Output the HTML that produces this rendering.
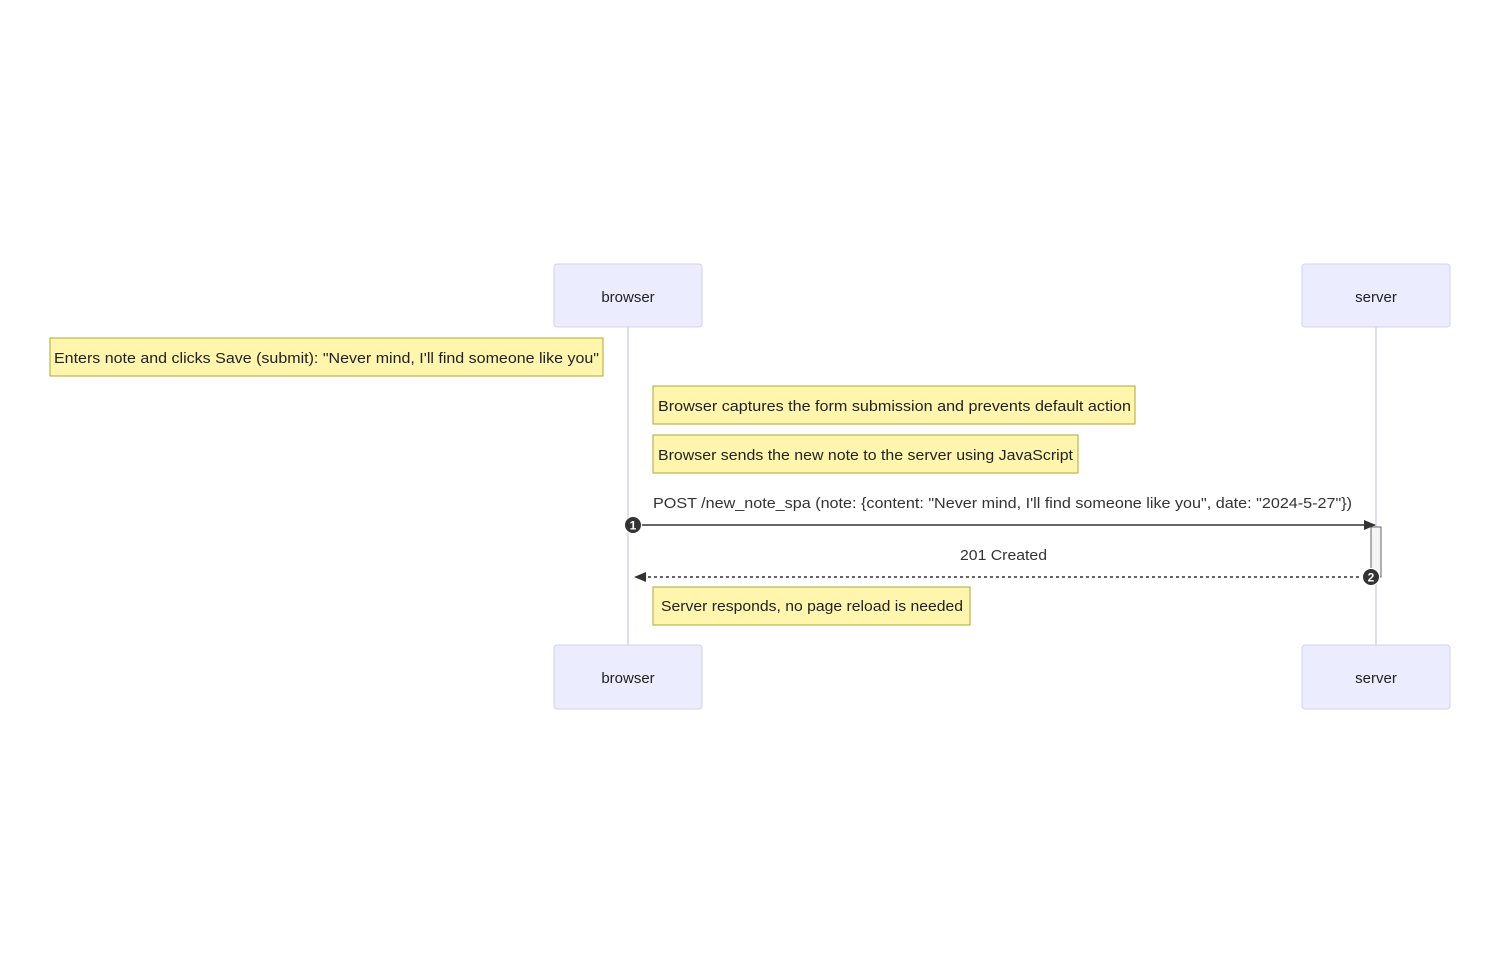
<!DOCTYPE html>
<html><head><style>html,body{margin:0;padding:0;background:#fff;}svg{display:block}</style></head>
<body>
<svg width="1500" height="974" viewBox="0 0 1500 974" xmlns="http://www.w3.org/2000/svg" font-family="Liberation Sans, sans-serif" font-size="15" fill="#333">
<defs>
<marker id="ah" markerWidth="12" markerHeight="12" refX="11" refY="5" orient="auto" markerUnits="userSpaceOnUse"><path d="M0,0 L12,5 L0,10 z" fill="#333"/></marker>
</defs>
<line x1="628" y1="327" x2="628" y2="645" stroke="#d8cff5" stroke-width="1.5"/>
<line x1="1376" y1="327" x2="1376" y2="645" stroke="#d8cff5" stroke-width="1.5"/>
<g fill="#ececff" stroke="#d6cff2" stroke-width="1">
<rect x="554" y="264" width="148" height="63" rx="3"/>
<rect x="1302" y="264" width="148" height="63" rx="3"/>
<rect x="554" y="645" width="148" height="64" rx="3"/>
<rect x="1302" y="645" width="148" height="64" rx="3"/>
</g>
<g text-anchor="middle" fill="#222">
<text x="628" y="302">browser</text>
<text x="1376" y="302">server</text>
<text x="628" y="683">browser</text>
<text x="1376" y="683">server</text>
</g>
<g fill="#fff5ad" stroke="#aaaa33" stroke-width="1">
<rect x="50" y="338" width="553" height="38"/>
<rect x="653" y="386" width="482" height="38"/>
<rect x="653" y="435" width="425" height="38"/>
<rect x="653" y="587" width="317" height="38"/>
</g>
<g fill="#222">
<text x="54" y="363" textLength="545" lengthAdjust="spacingAndGlyphs">Enters note and clicks Save (submit): "Never mind, I'll find someone like you"</text>
<text x="658" y="411" textLength="473" lengthAdjust="spacingAndGlyphs">Browser captures the form submission and prevents default action</text>
<text x="658" y="460" textLength="415" lengthAdjust="spacingAndGlyphs">Browser sends the new note to the server using JavaScript</text>
<text x="661" y="611" textLength="302" lengthAdjust="spacingAndGlyphs">Server responds, no page reload is needed</text>
</g>
<text x="653" y="508" textLength="699" lengthAdjust="spacingAndGlyphs">POST /new_note_spa (note: {content: "Never mind, I'll find someone like you", date: "2024-5-27"})</text>
<text x="960" y="560" textLength="87" lengthAdjust="spacingAndGlyphs">201 Created</text>
<rect x="1371" y="527" width="10" height="50" fill="#f4f4f4" stroke="#666" stroke-width="1"/>
<line x1="633" y1="525" x2="1375" y2="525" stroke="#333" stroke-width="1.5" marker-end="url(#ah)"/>
<line x1="1371" y1="577" x2="635" y2="577" stroke="#333" stroke-width="1.5" stroke-dasharray="3,3" marker-end="url(#ah)"/>
<circle cx="633" cy="525" r="8.5" fill="#333" stroke="#fff" stroke-width="1"/>
<text x="633" y="529.5" font-size="12" font-weight="bold" fill="#fff" text-anchor="middle">1</text>
<circle cx="1371" cy="577" r="8.5" fill="#333" stroke="#fff" stroke-width="1"/>
<text x="1371" y="581.5" font-size="12" font-weight="bold" fill="#fff" text-anchor="middle">2</text>
</svg>
</body></html>
